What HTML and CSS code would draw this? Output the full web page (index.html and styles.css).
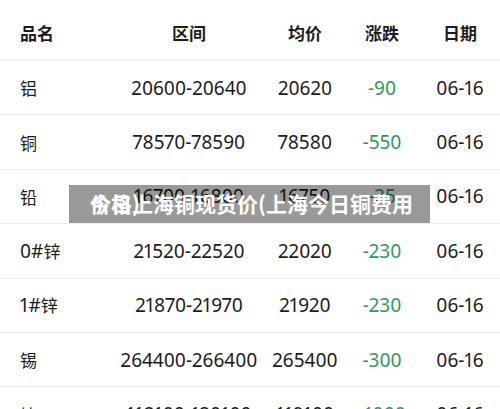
FILE: index.html
```html
<!DOCTYPE html>
<html lang="zh-CN">
<head>
<meta charset="utf-8">
<title>今日上海铜现货价</title>
<link rel="stylesheet" href="styles.css">
</head>
<body>
<div class="page">
  <div class="table">
    <div class="row head">
      <div class="c name">品名</div>
      <div class="c">区间</div>
      <div class="c">均价</div>
      <div class="c">涨跌</div>
      <div class="c">日期</div>
    </div>
    <div class="row">
      <div class="c name">铝</div>
      <div class="c">20600-20640</div>
      <div class="c">20620</div>
      <div class="c down">-90</div>
      <div class="c">06-16</div>
    </div>
    <div class="row">
      <div class="c name">铜</div>
      <div class="c">78570-78590</div>
      <div class="c">78580</div>
      <div class="c down">-550</div>
      <div class="c">06-16</div>
    </div>
    <div class="row">
      <div class="c name">铅</div>
      <div class="c">16700-16800</div>
      <div class="c">16750</div>
      <div class="c down">-25</div>
      <div class="c">06-16</div>
    </div>
    <div class="row">
      <div class="c name"><span class="num">0#</span>锌</div>
      <div class="c">21520-22520</div>
      <div class="c">22020</div>
      <div class="c down">-230</div>
      <div class="c">06-16</div>
    </div>
    <div class="row">
      <div class="c name"><span class="num">1#</span>锌</div>
      <div class="c">21870-21970</div>
      <div class="c">21920</div>
      <div class="c down">-230</div>
      <div class="c">06-16</div>
    </div>
    <div class="row">
      <div class="c name">锡</div>
      <div class="c">264400-266400</div>
      <div class="c">265400</div>
      <div class="c down">-300</div>
      <div class="c">06-16</div>
    </div>
    <div class="row">
      <div class="c name">镍</div>
      <div class="c">118100-120100</div>
      <div class="c">119100</div>
      <div class="c down">-1000</div>
      <div class="c">06-16</div>
    </div>
  </div>
  <div class="caption">
    <span class="caption-text">今日上海铜现货价(上海今日铜费用</span>
    <span class="caption-wrap">价格)</span>
  </div>
</div>
</body>
</html>
```
FILE: styles.css
```css
html, body {
  margin: 0;
  padding: 0;
  background: #ffffff;
}
body {
  font-family: "Noto Sans", "Noto Sans CJK SC", sans-serif;
  color: #1c1c1c;
  overflow: hidden;
}
.page {
  position: relative;
  width: 500px;
  height: 409px;
  overflow: hidden;
}
.table {
  display: flex;
  flex-direction: column;
}
.row {
  display: grid;
  grid-template-columns: 112px 154px 78px 76px 80px;
  align-items: center;
  height: 53.4px;
  border-bottom: 1px solid #eeeeee;
  font-size: 19px;
  font-variant-numeric: proportional-nums;
}
.row.head {
  height: 61px;
  box-sizing: border-box;
  padding-top: 6px;
  border-bottom: 2px solid #f1f1f1;
  font-size: 17px;
  font-weight: 700;
}
.c {
  text-align: center;
  white-space: nowrap;
}
.c.name {
  text-align: left;
  padding-left: 20px;
  font-size: 17px;
}
.num {
  font-size: 19px;
}
.down {
  color: #2f9a5b;
}
.caption {
  position: absolute;
  left: 69px;
  top: 185px;
  width: 361px;
  height: 38px;
  box-sizing: border-box;
  padding-left: 21px;
  background: rgba(0, 0, 0, 0.4);
  color: #ffffff;
  font-family: "Noto Sans CJK SC", sans-serif;
  font-weight: 700;
  font-size: 21px;
  line-height: 36px;
  white-space: nowrap;
  overflow: hidden;
}
.caption-wrap {
  position: absolute;
  left: 21px;
  top: 0;
}
```
